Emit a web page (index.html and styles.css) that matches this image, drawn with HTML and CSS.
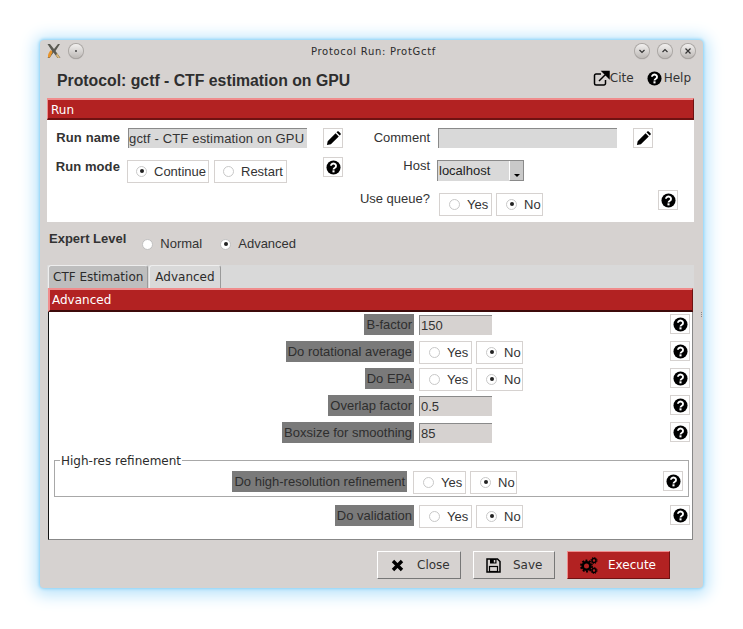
FILE: index.html
```html
<!DOCTYPE html>
<html>
  <head>
    <meta charset="UTF-8">
    <title>Protocol Run: ProtGctf</title>
    <link rel="stylesheet" href="styles.css">
  </head>
  <body>
    <svg class="defs" width="0" height="0">
      <symbol id="help" viewBox="0 0 16 16">
        <circle cx="8" cy="8" r="7.5" fill="#000"/>
        <path d="M5.3 6.2a2.7 2.4 0 1 1 4.2 2c-1 .6-1.5 1-1.5 2" fill="none" stroke="#fff" stroke-width="2"/>
        <rect x="6.9" y="11" width="2.2" height="2.2" fill="#fff"/>
      </symbol>
      <symbol id="pencil" viewBox="0 0 16 16">
        <path d="M1 15l.8-4.2L10.2 2.4l3.4 3.4-8.4 8.4zM11.2 1.4l.9-.9c.4-.4 1-.4 1.4 0l2 2c.4.4.4 1 0 1.4l-.9.9z" fill="#000"/>
      </symbol>
    </svg>

    <div class="window">
      <div class="titlebar">
        <div class="titlebar-left">
          <svg class="app-logo" width="18" height="16" viewBox="0 0 18 16">
            <path d="M2.500 1l4.500 7-4.500 7h2l4-5.500 4 5.500h3l-5-7 4.500-7h-2L9 6 5 1z" fill="#5a5a52"/>
            <path d="M3 14.500c-.5-3 1-5.500 3-7.500l1.500 2-2.500 5.500z" fill="#e8952c"/>
            <path d="M11 13l1-3 3 5h-2z" fill="#d9b77a"/>
          </svg>
          <span class="win-btn"><i class="pin"></i></span>
        </div>
        <div class="titlebar-text">Protocol Run: ProtGctf</div>
        <div class="titlebar-right">
          <span class="win-btn"><svg width="10" height="10" viewBox="0 0 10 10"><path d="M2.500 4l2.500 2.500L7.500 4" fill="none" stroke="#333" stroke-width="1.200"/></svg></span>
          <span class="win-btn"><svg width="10" height="10" viewBox="0 0 10 10"><path d="M2.500 6L5 3.500 7.500 6" fill="none" stroke="#333" stroke-width="1.200"/></svg></span>
          <span class="win-btn"><svg width="10" height="10" viewBox="0 0 10 10"><path d="M2.500 2.500l5 5M7.500 2.500l-5 5" fill="none" stroke="#333" stroke-width="1.200"/></svg></span>
        </div>
      </div>

      <div class="header">
        <h1>Protocol: gctf - CTF estimation on GPU</h1>
        <div class="links">
          <span class="link">
            <svg width="17" height="16" viewBox="0 0 17 16"><path d="M8 4H3a1.500 1.500 0 0 0-1.500 1.500v8A1.500 1.500 0 0 0 3 15h8a1.500 1.500 0 0 0 1.500-1.500V10" fill="none" stroke="#000" stroke-width="1.500"/><path d="M6 11l7-7M9.500 1.500H16V8z" fill="#000" stroke="#000" stroke-width="1.500"/></svg>Cite
          </span>
          <span class="link"><svg class="link-help" width="15" height="15"><use href="#help"/></svg>Help</span>
        </div>
      </div>

      <div class="section-bar run-bar">Run</div>
      <div class="run-panel">
        <label class="run-label strong row1">Run name</label>
        <div class="entry name-entry row1">gctf - CTF estimation on GPU</div>
        <span class="icon-btn row1 c3"><svg width="15" height="15"><use href="#pencil"/></svg></span>
        <label class="run-label row1 c4">Comment</label>
        <div class="entry comment-entry row1"></div>
        <span class="icon-btn row1 c6"><svg width="15" height="15"><use href="#pencil"/></svg></span>

        <label class="run-label strong row2 mode-label">Run mode</label>
        <div class="radios row2 mode-radios">
          <span class="radio-box opt-continue"><input type="radio" name="mode" checked>Continue</span>
          <span class="radio-box opt-restart"><input type="radio" name="mode">Restart</span>
        </div>
        <span class="icon-btn row2 c3 help2"><svg width="15" height="15"><use href="#help"/></svg></span>
        <label class="run-label row2 c4 host-label">Host</label>
        <div class="combo row2">
          <span class="combo-text">localhost</span>
          <span class="combo-arrow"><i></i></span>
        </div>

        <label class="run-label row3 c4 queue-label">Use queue?</label>
        <div class="radios row3 queue-radios">
          <span class="radio-box opt-yes"><input type="radio" name="queue">Yes</span>
          <span class="radio-box opt-no"><input type="radio" name="queue" checked>No</span>
        </div>
        <span class="icon-btn row3 c7"><svg width="15" height="15"><use href="#help"/></svg></span>
      </div>

      <div class="expert">
        <span class="expert-label">Expert Level</span>
        <span class="expert-opt"><input type="radio" name="level">Normal</span>
        <span class="expert-opt"><input type="radio" name="level" checked>Advanced</span>
      </div>

      <div class="tabs">
        <span class="tab">CTF Estimation</span>
        <span class="tab tab-active">Advanced</span>
      </div>
      <div class="section-bar adv-bar">Advanced</div>
      <div class="adv-panel">
        <div class="param">
          <span class="param-label">B-factor</span>
          <div class="entry num-entry">150</div>
          <span class="icon-btn"><svg width="15" height="15"><use href="#help"/></svg></span>
        </div>
        <div class="param">
          <span class="param-label">Do rotational average</span>
          <div class="radios">
            <span class="radio-box opt-yes"><input type="radio" name="rot">Yes</span>
            <span class="radio-box opt-no"><input type="radio" name="rot" checked>No</span>
          </div>
          <span class="icon-btn"><svg width="15" height="15"><use href="#help"/></svg></span>
        </div>
        <div class="param">
          <span class="param-label">Do EPA</span>
          <div class="radios">
            <span class="radio-box opt-yes"><input type="radio" name="epa">Yes</span>
            <span class="radio-box opt-no"><input type="radio" name="epa" checked>No</span>
          </div>
          <span class="icon-btn"><svg width="15" height="15"><use href="#help"/></svg></span>
        </div>
        <div class="param">
          <span class="param-label">Overlap factor</span>
          <div class="entry num-entry">0.5</div>
          <span class="icon-btn"><svg width="15" height="15"><use href="#help"/></svg></span>
        </div>
        <div class="param">
          <span class="param-label">Boxsize for smoothing</span>
          <div class="entry num-entry">85</div>
          <span class="icon-btn"><svg width="15" height="15"><use href="#help"/></svg></span>
        </div>

        <fieldset class="group">
          <legend>High-res refinement</legend>
          <div class="param group-param">
            <span class="param-label">Do high-resolution refinement</span>
            <div class="radios">
              <span class="radio-box opt-yes"><input type="radio" name="high">Yes</span>
              <span class="radio-box opt-no"><input type="radio" name="high" checked>No</span>
            </div>
            <span class="icon-btn"><svg width="15" height="15"><use href="#help"/></svg></span>
          </div>
        </fieldset>

        <div class="param">
          <span class="param-label">Do validation</span>
          <div class="radios">
            <span class="radio-box opt-yes"><input type="radio" name="valid">Yes</span>
            <span class="radio-box opt-no"><input type="radio" name="valid" checked>No</span>
          </div>
          <span class="icon-btn"><svg width="15" height="15"><use href="#help"/></svg></span>
        </div>
      </div>

      <div class="actions">
        <button class="btn btn-close">
          <svg width="13" height="13" viewBox="0 0 13 13"><path d="M2 2l9 9M11 2l-9 9" stroke="#000" stroke-width="3.400"/></svg>
          Close
        </button>
        <button class="btn btn-save">
          <svg width="15" height="15" viewBox="0 0 15 15"><path d="M1 1h10.500L14 3.500V14H1z" fill="none" stroke="#000" stroke-width="1.500"/><rect x="4" y="1" width="6.500" height="4.500" fill="#000"/><rect x="7.800" y="2" width="1.500" height="2.500" fill="#d6d2d0"/><rect x="3.500" y="8.500" width="8" height="5" fill="none" stroke="#000" stroke-width="1.200"/></svg>
          Save
        </button>
        <button class="btn btn-exec">
          <svg width="18" height="17" viewBox="0 0 18 17">
            <circle cx="6.500" cy="9" r="3.800" fill="none" stroke="#000" stroke-width="2.600"/>
            <circle cx="6.500" cy="9" r="5.600" fill="none" stroke="#000" stroke-width="1.600" stroke-dasharray="2 1.520"/>
            <circle cx="14" cy="3.500" r="2" fill="none" stroke="#000" stroke-width="1.500"/>
            <circle cx="14" cy="3.500" r="3.100" fill="none" stroke="#000" stroke-width="1" stroke-dasharray="1.200 1.230"/>
            <circle cx="14" cy="13.500" r="2" fill="none" stroke="#000" stroke-width="1.500"/>
            <circle cx="14" cy="13.500" r="3.100" fill="none" stroke="#000" stroke-width="1" stroke-dasharray="1.200 1.230"/>
          </svg>
          Execute
        </button>
      </div>
      <div class="sash"><i></i><i></i><i></i></div>
    </div>
  </body>
</html>
```

FILE: styles.css
```css
html, body {
  margin: 0;
  height: 100%;
  background-color: #fff;
}
body {
  padding: 40px 40px 0;
  box-sizing: border-box;
  width: 743px;
  height: 629px;
  overflow: hidden;
  font-family: "Liberation Sans", Arial, sans-serif;
  font-size: 13px;
  color: #333;
}
.defs {
  position: absolute;
}
.window {
  position: relative;
  width: 663px;
  height: 548px;
  box-sizing: border-box;
  background-color: #d6d2d0;
  border-radius: 4px;
  box-shadow: 0 0 3px 1px #8fd4f8, 0 2px 16px 5px #b9e3fb;
  padding: 0 9px 0 7px;
  display: flex;
  flex-direction: column;
}
.sash {
  position: absolute;
  left: 661px;
  top: 272px;
  display: flex;
  flex-direction: column;
  gap: 1px;
}
.sash i {
  width: 1px;
  height: 1px;
  background-color: #888;
}

/* title bar */
.titlebar {
  height: 22px;
  margin: 0 -1px 0 -2px;
  display: grid;
  grid-template-columns: 1fr auto 1fr;
  align-items: center;
}
.titlebar-left {
  display: flex;
  align-items: center;
  gap: 6px;
}
.titlebar-right {
  display: flex;
  justify-content: flex-end;
  gap: 9px;
}
.titlebar-text {
  font-family: "DejaVu Sans", sans-serif;
  font-size: 10px;
  letter-spacing: 0.7px;
  color: #2b2b2b;
  margin: 1px 0 0 7px;
}
.app-logo {
  display: block;
}
.win-btn {
  width: 14px;
  height: 14px;
  border-radius: 50%;
  background: linear-gradient(#f2f0ef, #bdb9b6);
  box-shadow: 0 0 0 1px #aaa6a3, 0 1px 1px #8a8683;
  display: flex;
  align-items: center;
  justify-content: center;
}
.pin {
  width: 2px;
  height: 2px;
  border-radius: 50%;
  background-color: #444;
}

/* header */
.header {
  height: 36px;
  display: flex;
  justify-content: space-between;
  align-items: flex-start;
}
h1 {
  margin: 10px 0 0 10px;
  font-size: 15.800px;
  line-height: 18px;
  color: #2e2e2e;
}
.links {
  display: flex;
  gap: 13px;
  margin: 8px 3px 0 0;
  font-family: "DejaVu Sans", sans-serif;
  font-size: 12px;
  line-height: 16px;
}
.link {
  display: flex;
  align-items: center;
}
.link-help {
  margin-right: 2px;
}

/* red bars */
.section-bar {
  height: 22px;
  box-sizing: border-box;
  background-color: #b22222;
  border-top: 2px solid #f08c8c;
  border-left: 1px solid #f08c8c;
  border-bottom: 2px solid #6f1212;
  border-right: 1px solid #6f1212;
  color: #fff;
  font-family: "DejaVu Sans", sans-serif;
  font-size: 12px;
  line-height: 20px;
  padding-left: 3px;
}

/* run panel */
.run-panel {
  height: 102px;
  background-color: #fff;
  display: grid;
  grid-template-columns: 73px 8px 195px 20px 87px 8px 195px 20px 25px;
  grid-template-rows: 37px 33px 32px;
}
.run-label {
  justify-self: end;
  align-self: start;
  margin-top: 10px;
  grid-column: 1;
  line-height: 16px;
}
.strong {
  font-weight: bold;
  letter-spacing: 0.1px;
}
.row1 { grid-row: 1; }
.row2 { grid-row: 2; }
.row3 { grid-row: 3; }
.c3 { grid-column: 4; }
.c4 { grid-column: 5; }
.c6 { grid-column: 8; }
.c7 { grid-column: 9; justify-self: end; }
.entry {
  background-color: #d9d9d9;
  border-top: 1px solid #8a8a8a;
  border-left: 1px solid #8a8a8a;
  box-sizing: border-box;
  height: 20px;
  line-height: 19px;
  padding-left: 1px;
  white-space: nowrap;
  overflow: hidden;
}
.name-entry {
  grid-column: 3;
  width: 179px;
  margin-top: 8px;
  padding-left: 0;
  letter-spacing: 0.17px;
}
.comment-entry {
  grid-column: 7;
  width: 179px;
  margin-top: 8px;
}
.row1.icon-btn {
  margin-top: 8px;
}
.mode-label {
  margin-top: 2px;
}
.mode-radios {
  grid-column: 3;
  margin: 3px 0 0 -1px;
}
.help2 {
  margin-top: 0;
}
.host-label {
  margin-top: 1px;
}
.combo {
  grid-column: 7;
  margin: 3px 0 0 -1px;
  width: 87px;
  height: 21px;
  box-sizing: border-box;
  background-color: #d9d9d9;
  border-top: 1px solid #8a8a8a;
  border-left: 1px solid #8a8a8a;
  display: flex;
  justify-content: space-between;
  color: #222;
  line-height: 19px;
  padding-left: 1px;
}
.combo-arrow {
  width: 13px;
  background-color: #c9c9c9;
  border-left: 1px solid #fff;
  border-right: 1px solid #8a8a8a;
  border-bottom: 1px solid #8a8a8a;
  display: flex;
  justify-content: center;
  align-items: flex-end;
  padding-bottom: 3px;
}
.combo-arrow i {
  width: 0;
  height: 0;
  border-left: 3.500px solid transparent;
  border-right: 3.500px solid transparent;
  border-top: 3.500px solid #000;
  display: block;
}
.queue-label {
  margin-top: 1px;
}
.queue-radios {
  grid-column: 7;
  margin: 3px 0 0 1px;
}

/* widgets */
.icon-btn {
  width: 20px;
  height: 20px;
  box-sizing: border-box;
  background-color: #fff;
  border: 1px solid #d6d2d0;
  display: flex;
  align-items: center;
  justify-content: center;
}
.icon-btn svg {
  display: block;
}
.radios {
  display: flex;
  gap: 5px;
  height: 23px;
}
.radio-box {
  height: 23px;
  box-sizing: border-box;
  border: 1px solid #d6d2d0;
  background-color: #fff;
  display: flex;
  align-items: center;
  padding: 0 0 1px 8px;
  line-height: 1;
  color: #333;
}
.opt-continue { width: 82px; }
.opt-restart { width: 73px; }
.opt-yes { width: 53px; padding-left: 9px; }
.opt-no { width: 47px; padding-left: 9px; margin-left: -1px; }
input[type="radio"] {
  appearance: none;
  width: 11px;
  height: 11px;
  margin: 0 7px 0 0;
  border-radius: 50%;
  border: 1px solid #c8c8c8;
  background-color: #fff;
  box-sizing: border-box;
  flex: none;
  display: grid;
  place-items: center;
}
input[type="radio"]:checked::before {
  content: "";
  width: 4px;
  height: 4px;
  border-radius: 50%;
  background-color: #222;
}

/* expert level */
.expert {
  height: 43px;
  display: flex;
  align-items: flex-start;
  padding-left: 2px;
}
.expert-label {
  font-weight: bold;
  margin: 9px 16px 0 0;
  line-height: 16px;
}
.expert-opt {
  display: flex;
  align-items: center;
  margin: 14px 18px 0 0;
  line-height: 16px;
}
.expert-opt input {
  border-color: #c0c0c0;
}

/* tabs */
.tabs {
  height: 23px;
  background-color: #d9d9d9;
  display: flex;
  gap: 1px;
  padding-left: 1px;
  align-items: flex-end;
}
.tab {
  height: 23px;
  box-sizing: border-box;
  background-color: #bebebe;
  border: 1px solid #9a9a9a;
  border-bottom: none;
  border-top-color: #eee;
  border-left-color: #eee;
  border-radius: 3px 3px 0 0;
  font-family: "DejaVu Sans", sans-serif;
  font-size: 12px;
  line-height: 23px;
  padding: 0 4px;
  color: #2b2b2b;
}
.tab-active {
  background-color: #d9d9d9;
  padding: 0 5px;
}
.adv-bar {
  margin-left: 1px;
  margin-right: 1px;
  height: 24px;
  border-left-width: 2px;
  line-height: 20px;
  padding-left: 2px;
  border-bottom-color: #3d0a0a;
}

/* advanced panel */
.adv-panel {
  height: 228px;
  box-sizing: border-box;
  margin: 0 1px;
  background-color: #fff;
  border-left: 1px solid #111;
  border-right: 1px solid #888;
  border-bottom: 1px solid #888;
  padding: 2px 2px 0 0;
  display: flex;
  flex-direction: column;
}
.param {
  display: grid;
  grid-template-columns: 365px 1fr 20px;
  column-gap: 5px;
  height: 27px;
  align-items: start;
  flex: none;
}
.param-label {
  justify-self: end;
  height: 21px;
  line-height: 21px;
  background-color: #7a7a7a;
  color: #2e2e2e;
  padding: 0 2px;
  white-space: nowrap;
}
.param .num-entry {
  width: 73px;
  background-color: #d6d2d0;
  margin-top: 1px;
  line-height: 20px;
  padding-left: 1px;
}
.group {
  margin: 3px 1px 8px 5px;
  padding: 0;
  border: 1px solid #a8a8a8;
  height: 45px;
  box-sizing: border-box;
  flex: none;
  min-width: 0;
}
.group legend {
  font-family: "DejaVu Sans", sans-serif;
  font-size: 12px;
  line-height: 14px;
  padding: 2px 1px 0;
  margin-left: 5px;
  color: #2b2b2b;
}
.group-param {
  grid-template-columns: 352px 1fr 20px;
  column-gap: 6px;
  height: 23px;
  margin: 3px 5px 0 0;
}

/* bottom buttons */
.actions {
  display: flex;
  justify-content: flex-end;
  gap: 12px;
  padding: 11px 24px 0 0;
}
.btn {
  height: 28px;
  box-sizing: border-box;
  background-color: #d6d2d0;
  border: 1px solid #fff;
  border-right-color: #777;
  border-bottom-color: #777;
  font-family: "DejaVu Sans", sans-serif;
  font-size: 12px;
  color: #333;
  display: flex;
  align-items: center;
  padding: 0;
}
.btn-close {
  width: 84px;
  padding-left: 13px;
  gap: 13px;
}
.btn-save {
  width: 82px;
  padding-left: 12px;
  gap: 12px;
}
.btn-exec {
  width: 103px;
  padding-left: 12px;
  gap: 10px;
  background-color: #b22222;
  border-color: #f08c8c #6f1212 #6f1212 #f08c8c;
  color: #fff;
}
```
